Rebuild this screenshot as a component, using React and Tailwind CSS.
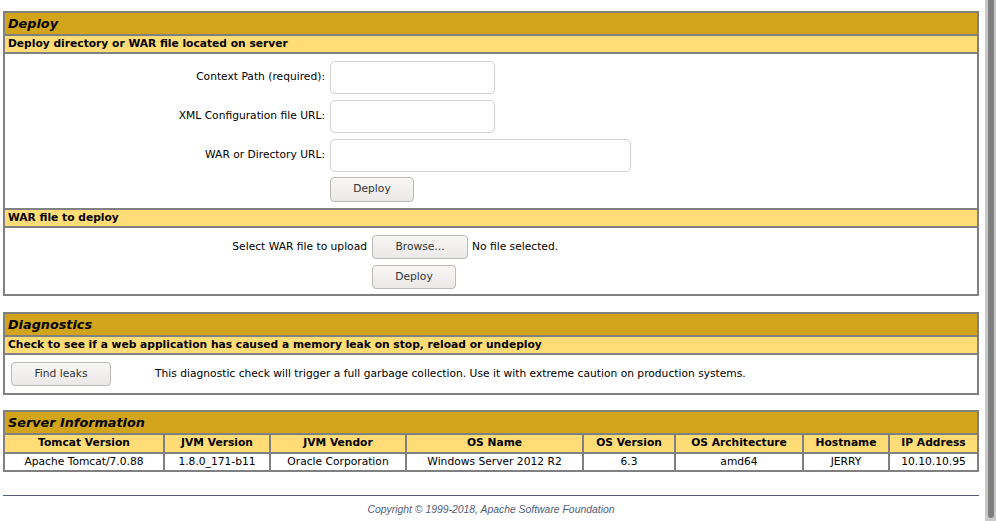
const cell = 'border border-[#808080]';
const title = 'border border-[#808080] h-[23px] bg-[#D2A41C] px-[3px] flex items-center font-bold italic text-[12.8px]';
const header = 'border border-[#808080] h-[18px] bg-[#FFDC75] px-[3px] flex items-center font-bold text-[10.7px]';

function Btn({ className = '', children }) {
  return (
    <button className={`h-[24px] rounded-[4px] border border-[#bdb9b4] bg-linear-to-b from-[#f8f7f6] to-[#ebe9e7] text-[10.7px] text-[#2e3436] ${className}`}>
      {children}
    </button>
  );
}

function Field({ className = '' }) {
  return <input type="text" className={`h-[33px] rounded-[5px] border border-[#d3cfcb] bg-white outline-none ${className}`} />;
}

function Deploy() {
  return (
    <div className={cell}>
      <div className={title}>Deploy</div>
      <div className={header}>Deploy directory or WAR file located on server</div>
      <div className={`${cell} h-[156px] pt-[7px]`}>
        <div className="grid grid-cols-[320px_1fr] gap-x-[5px] gap-y-[6px] items-center text-[10.7px]">
          <div className="text-right">Context Path (required):</div>
          <div><Field className="w-[165px]" /></div>
          <div className="text-right">XML Configuration file URL:</div>
          <div><Field className="w-[165px]" /></div>
          <div className="text-right">WAR or Directory URL:</div>
          <div><Field className="w-[301px]" /></div>
          <div />
          <div className="-mt-[1px]"><Btn className="w-[84px] h-[25px]">Deploy</Btn></div>
        </div>
      </div>
      <div className={header}>WAR file to deploy</div>
      <div className={`${cell} h-[68px] pt-[7px]`}>
        <div className="grid grid-cols-[362px_1fr] gap-x-[5px] gap-y-[6px] items-center text-[10.7px]">
          <div className="text-right">Select WAR file to upload</div>
          <div className="flex items-center gap-[4px]">
            <Btn className="w-[96px]">Browse...</Btn>
            <span>No file selected.</span>
          </div>
          <div />
          <div><Btn className="w-[84px]">Deploy</Btn></div>
        </div>
      </div>
    </div>
  );
}

function Diagnostics() {
  return (
    <div className={`${cell} mt-[16px]`}>
      <div className={title}>Diagnostics</div>
      <div className={header}>Check to see if a web application has caused a memory leak on stop, reload or undeploy</div>
      <div className={`${cell} h-[40px] flex items-center pl-[6px] text-[10.7px]`}>
        <Btn className="w-[100px]">Find leaks</Btn>
        <span className="ml-[44px] mt-[1px]">This diagnostic check will trigger a full garbage collection. Use it with extreme caution on production systems.</span>
      </div>
    </div>
  );
}

const cols = [
  ['Tomcat Version', 'Apache Tomcat/7.0.88', 'w-[160px]'],
  ['JVM Version', '1.8.0_171-b11', 'w-[106px]'],
  ['JVM Vendor', 'Oracle Corporation', 'w-[136px]'],
  ['OS Name', 'Windows Server 2012 R2', 'w-[177px]'],
  ['OS Version', '6.3', 'w-[92px]'],
  ['OS Architecture', 'amd64', 'w-[128px]'],
  ['Hostname', 'JERRY', 'w-[86px]'],
  ['IP Address', '10.10.10.95', 'w-[89px]'],
];

function ServerInfo() {
  return (
    <table className="mt-[15px] w-full table-fixed border-separate border-spacing-0 border border-[#808080]">
      <colgroup>
        {cols.map(c => <col key={c[0]} className={c[2]} />)}
      </colgroup>
      <tbody>
        <tr>
          <td colSpan={8} className="border border-[#808080] h-[23px] bg-[#D2A41C] px-[3px] font-bold italic text-[12.8px] text-left">Server Information</td>
        </tr>
        <tr>
          {cols.map(c => (
            <td key={c[0]} className="border border-[#808080] h-[19px] bg-[#FFDC75] text-center font-bold text-[10.7px] p-0">{c[0]}</td>
          ))}
        </tr>
        <tr>
          {cols.map(c => (
            <td key={c[0]} className="border border-[#808080] h-[18px] text-center text-[10.7px] p-0">{c[1]}</td>
          ))}
        </tr>
      </tbody>
    </table>
  );
}

export default function App() {
  return (
    <div className="flex h-[521px] overflow-hidden bg-white text-black font-['DejaVu_Sans',sans-serif]">
      <div className="flex-1 pl-[3px] pr-[5px] pt-[11px]">
        <Deploy />
        <Diagnostics />
        <ServerInfo />
        <div className="mt-[23px] border-t border-[#525D76]" />
        <p className="mt-[6px] text-center italic text-[10.4px] text-[#525D76] font-['Liberation_Sans',Arial,sans-serif]">
          Copyright © 1999-2018, Apache Software Foundation
        </p>
      </div>
      <div className="w-[12px] border-l border-white bg-[#c9c9c9] flex justify-end pr-[2px] pb-[3px]">
        <div className="w-[6px] h-full bg-[#7f7f7f] rounded-b-[3px]" />
      </div>
    </div>
  );
}
